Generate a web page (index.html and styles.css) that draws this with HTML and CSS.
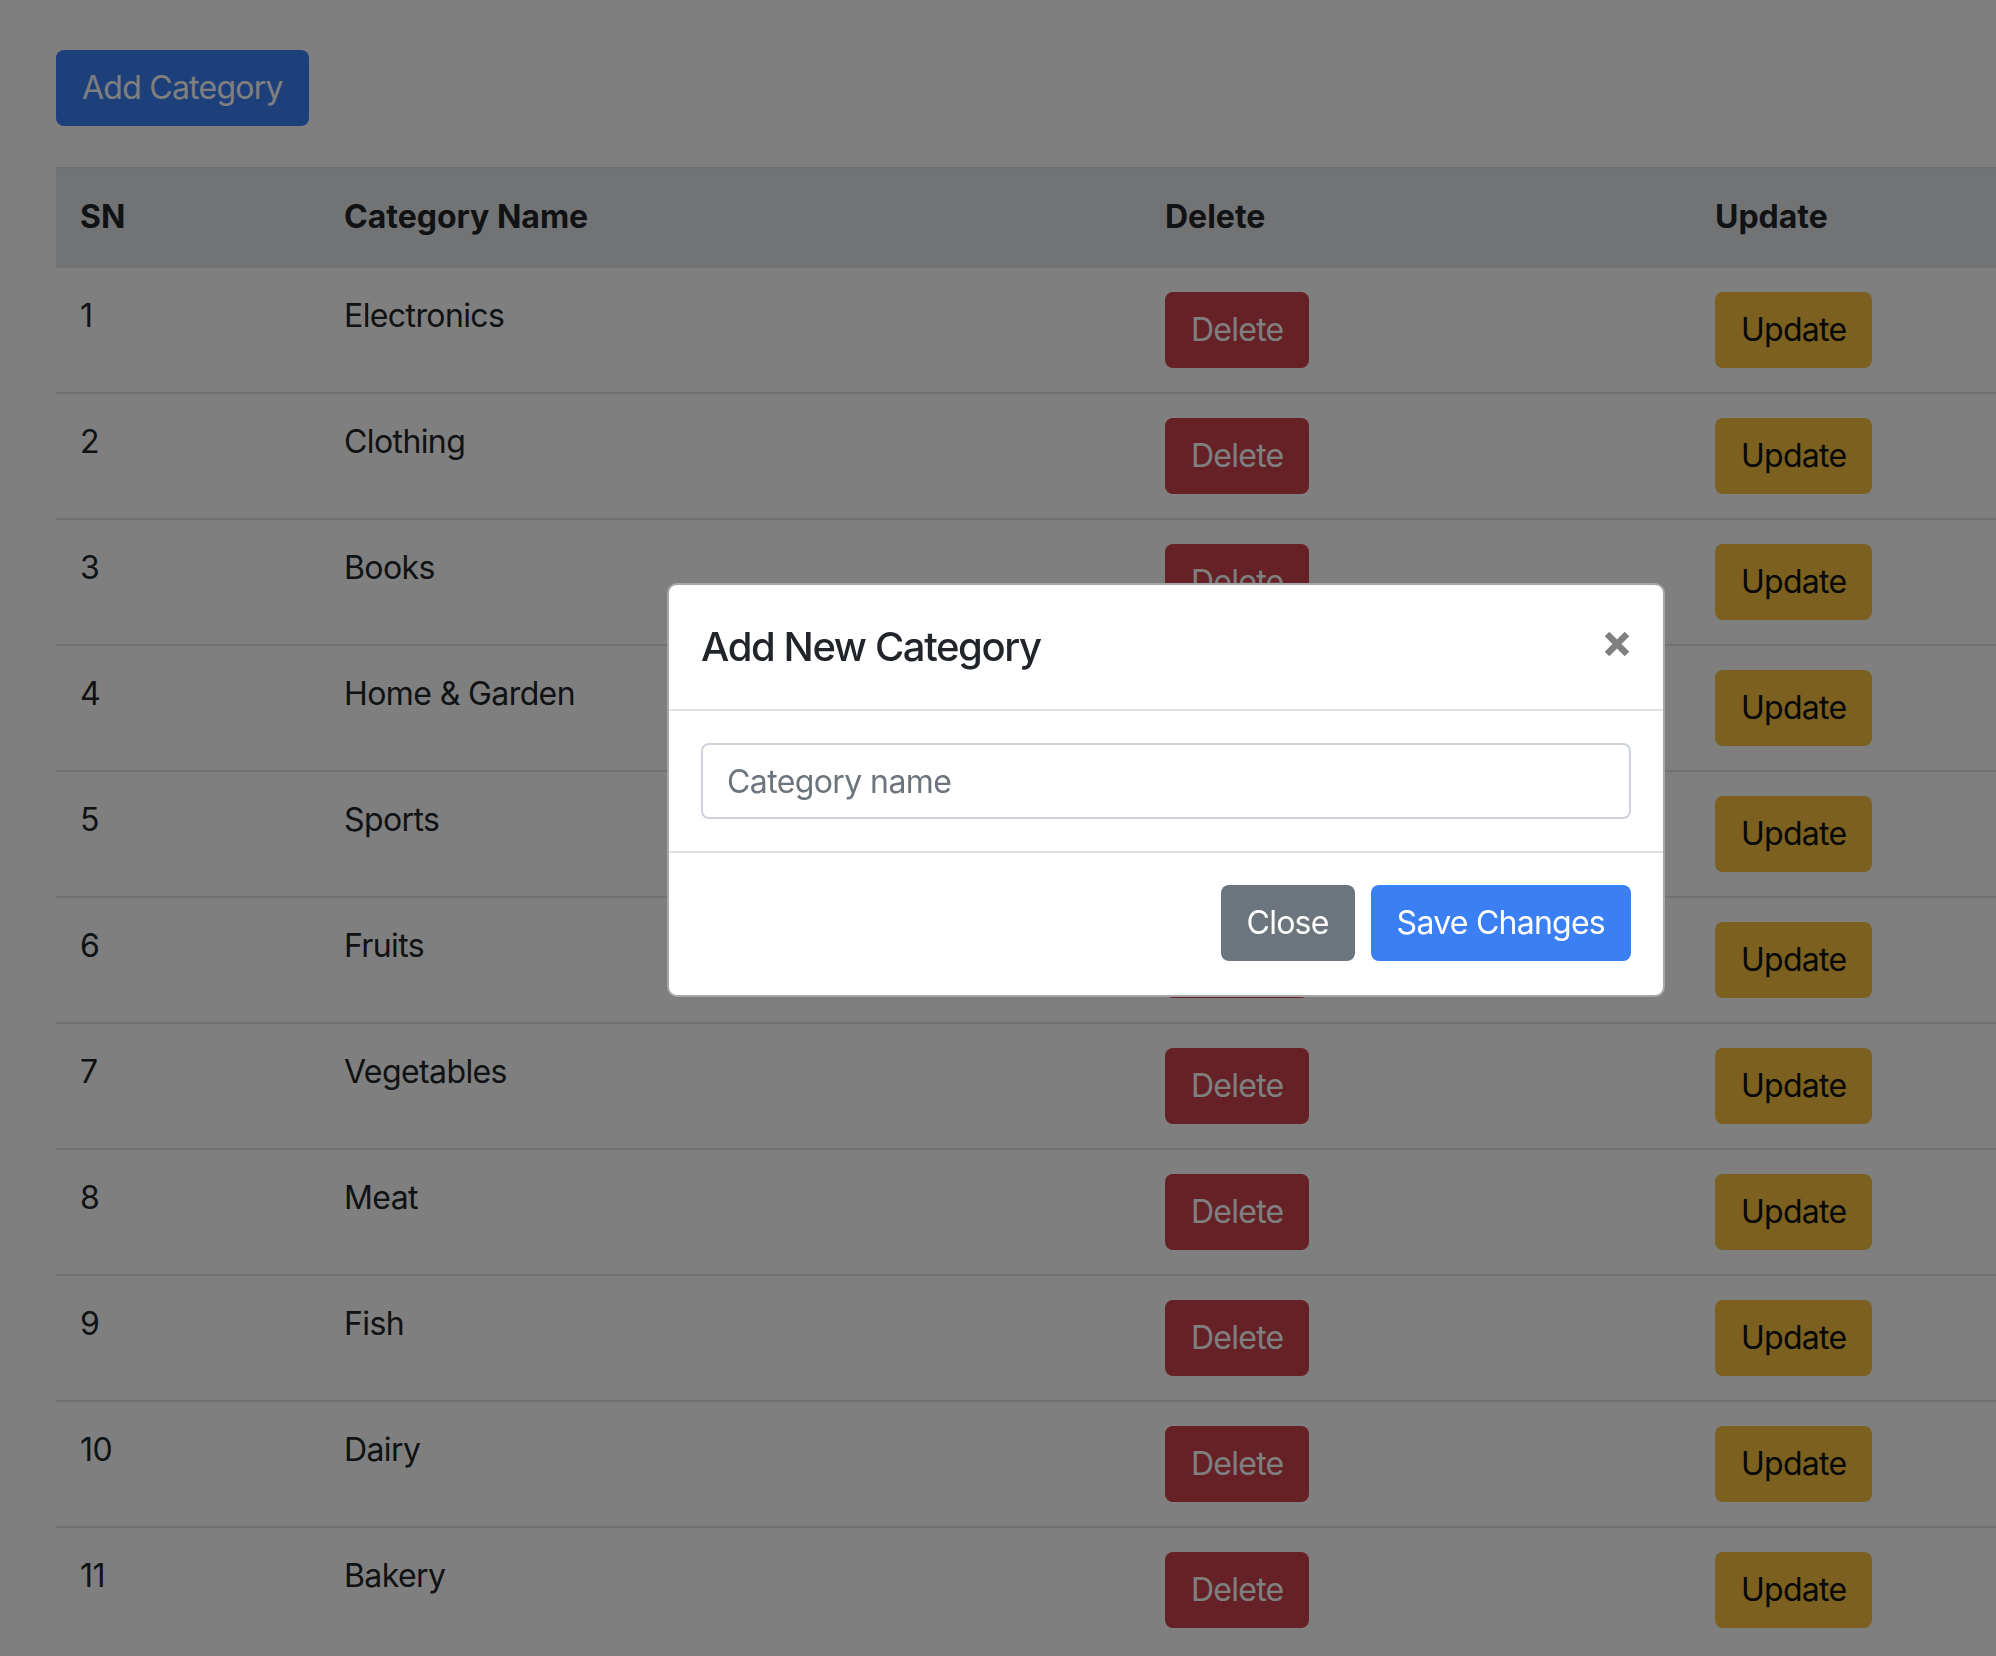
FILE: index.html
```html
<!DOCTYPE html>
<html lang="en">
<head>
<meta charset="utf-8">
<title>Categories</title>
<link rel="stylesheet" href="styles.css">
</head>
<body>
<div class="page">
  <button class="btn btn-primary">Add Category</button>
  <table class="table">
    <colgroup>
      <col class="c-sn"><col class="c-name"><col class="c-del"><col class="c-upd">
    </colgroup>
    <thead>
      <tr><th>SN</th><th>Category Name</th><th>Delete</th><th>Update</th></tr>
    </thead>
    <tbody>
      <tr><td>1</td><td>Electronics</td><td><button class="btn btn-danger">Delete</button></td><td><button class="btn btn-warning">Update</button></td></tr>
      <tr><td>2</td><td>Clothing</td><td><button class="btn btn-danger">Delete</button></td><td><button class="btn btn-warning">Update</button></td></tr>
      <tr><td>3</td><td>Books</td><td><button class="btn btn-danger">Delete</button></td><td><button class="btn btn-warning">Update</button></td></tr>
      <tr><td>4</td><td>Home &amp; Garden</td><td><button class="btn btn-danger">Delete</button></td><td><button class="btn btn-warning">Update</button></td></tr>
      <tr><td>5</td><td>Sports</td><td><button class="btn btn-danger">Delete</button></td><td><button class="btn btn-warning">Update</button></td></tr>
      <tr><td>6</td><td>Fruits</td><td><button class="btn btn-danger">Delete</button></td><td><button class="btn btn-warning">Update</button></td></tr>
      <tr><td>7</td><td>Vegetables</td><td><button class="btn btn-danger">Delete</button></td><td><button class="btn btn-warning">Update</button></td></tr>
      <tr><td>8</td><td>Meat</td><td><button class="btn btn-danger">Delete</button></td><td><button class="btn btn-warning">Update</button></td></tr>
      <tr><td>9</td><td>Fish</td><td><button class="btn btn-danger">Delete</button></td><td><button class="btn btn-warning">Update</button></td></tr>
      <tr><td>10</td><td>Dairy</td><td><button class="btn btn-danger">Delete</button></td><td><button class="btn btn-warning">Update</button></td></tr>
      <tr><td>11</td><td>Bakery</td><td><button class="btn btn-danger">Delete</button></td><td><button class="btn btn-warning">Update</button></td></tr>
    </tbody>
  </table>
</div>

<div class="backdrop"></div>

<div class="modal">
  <div class="modal-header">
    <h5 class="modal-title">Add New Category</h5>
    <button class="close" aria-label="Close">
      <svg width="26" height="26" viewBox="0 0 26 26"><path d="M3 3 L23 23 M23 3 L3 23" stroke="#808080" stroke-width="6.5" stroke-linecap="butt" fill="none"/></svg>
    </button>
  </div>
  <div class="modal-body">
    <input class="form-control" type="text" placeholder="Category name">
  </div>
  <div class="modal-footer">
    <button class="btn btn-secondary">Close</button>
    <button class="btn btn-save">Save Changes</button>
  </div>
</div>
</body>
</html>
```

FILE: styles.css
```css
html, body {
  margin: 0;
  padding: 0;
  overflow: hidden;
  height: 100%;
}
body {
  font-family: Inter, "Noto Sans", "Liberation Sans", sans-serif;
  font-size: 32px;
  line-height: 48px;
  letter-spacing: -0.6px;
  color: #212529;
  background: #fff;
}
.page {
  padding: 50px 0 0 56px;
}
.btn {
  display: inline-block;
  font-family: inherit;
  font-size: 32px;
  line-height: 48px;
  letter-spacing: -0.75px;
  padding: 12px 24px;
  border: 2px solid transparent;
  border-radius: 8px;
  cursor: pointer;
}
.btn-primary { background: #3b7ff5; color: #fff; }
.btn-danger { background: #ca424c; color: #fff; }
.btn-warning { background: #f8c03e; color: #111; }
.btn-secondary { background: #6c757d; color: #fff; }
.btn-save { background: #3b7ff5; color: #fff; }

.table {
  margin-top: 41px;
  width: 2220px;
  border-collapse: collapse;
  table-layout: fixed;
}
.c-sn { width: 264px; }
.c-name { width: 821px; }
.c-del { width: 550px; }
.c-upd { width: 585px; }
.table th, .table td {
  padding: 24px;
  text-align: left;
  vertical-align: top;
  border-top: 2px solid #dee2e6;
}
.table thead th {
  background: #e5e7eb;
  font-weight: 700;
  letter-spacing: 0;
  vertical-align: bottom;
  border-bottom: 3px solid #dee2e6;
}
.table td .btn { display: block; width: max-content; }

.backdrop {
  position: fixed;
  inset: 0;
  background: rgba(0, 0, 0, 0.5);
}

.modal {
  position: absolute;
  left: 667px;
  top: 583px;
  width: 998px;
  box-sizing: border-box;
  background: #fff;
  border: 2px solid rgba(0, 0, 0, 0.35);
  border-radius: 10px;
}
.modal-header {
  display: flex;
  align-items: center;
  justify-content: space-between;
  padding: 32px 32px;
  border-bottom: 2px solid #dee2e6;
}
.modal-title {
  margin: 0;
  font-size: 40px;
  line-height: 60px;
  font-weight: 500;
  letter-spacing: -1.4px;
  color: #212529;
}
.close {
  background: none;
  border: 0;
  padding: 0;
  width: 26px;
  height: 26px;
  display: flex;
  margin-right: 1px;
  margin-top: -6px;
}
.modal-body {
  padding: 32px;
}
.form-control {
  display: block;
  width: 100%;
  box-sizing: border-box;
  height: 76px;
  padding: 12px 24px;
  font-family: inherit;
  font-size: 32px;
  line-height: 48px;
  letter-spacing: -0.6px;
  color: #495057;
  border: 2px solid #ced4da;
  border-radius: 8px;
  outline: none;
}
.form-control::placeholder { color: #6c757d; }
.modal-footer {
  display: flex;
  justify-content: flex-end;
  align-items: center;
  gap: 16px;
  padding: 32px 32px 34px;
  border-top: 2px solid #dee2e6;
}
```
